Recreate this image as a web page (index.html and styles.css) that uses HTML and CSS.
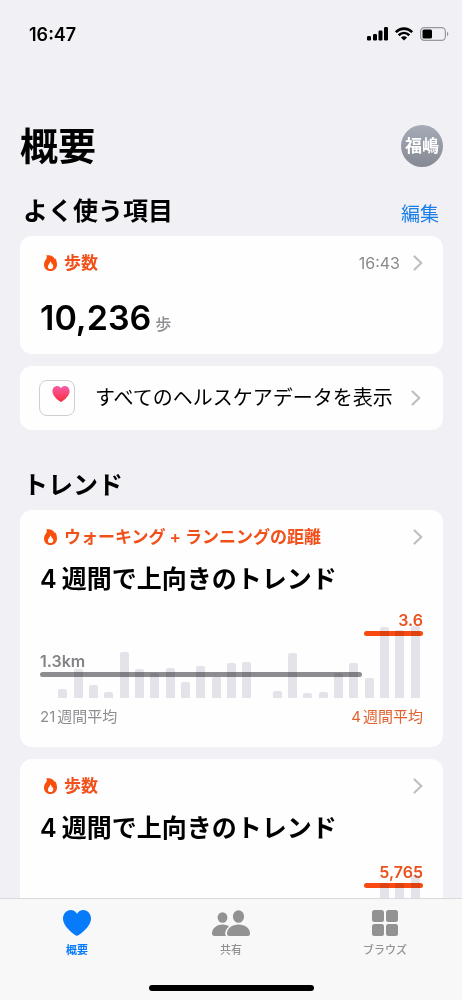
FILE: index.html
```html
<!DOCTYPE html>
<html lang="ja">
<head>
<meta charset="utf-8">
<meta name="viewport" content="width=device-width, initial-scale=1">
<title>概要</title>
<link rel="stylesheet" href="styles.css">
</head>
<body>
<svg class="defs" aria-hidden="true">
  <symbol id="flame" viewBox="0 0 13 16">
    <path fill-rule="evenodd" d="M2.200 0.300C6 -0.300 10 1.200 10.600 4.200C10.900 3.900 11 3.500 11 3.100C12.400 4.800 13 7.200 13 9.400C13 13.300 10.200 16 6.500 16C2.700 16 0 13.400 0 9.700C0 7.400 0.800 5.800 2 4.400C2.900 3.200 3.200 1.600 2.200 0.300ZM6.200 6.300C6.400 8.400 3.900 9.300 3.900 11.700C3.900 13.200 5 14.100 6.500 14.100C8.100 14.100 9.300 13 9.300 11.500C9.300 10.500 8.900 9.600 8.400 9C8.300 9.400 8.100 9.700 7.800 9.800C7.900 8.400 7.400 7.100 6.200 6.300Z"/>
  </symbol>
  <symbol id="chevron" viewBox="0 0 10 16">
    <path d="M1.500 1.500L8.300 8L1.500 14.500" fill="none" stroke="currentColor" stroke-width="2.200" stroke-linecap="round" stroke-linejoin="round"/>
  </symbol>
  <symbol id="heart" viewBox="0 0 28 26">
    <path d="M14 26C13 26 0 17.600 0 8.600C0 3.600 3.400 0 7.700 0C10.400 0 12.700 1.400 14 3.800C15.300 1.400 17.600 0 20.300 0C24.600 0 28 3.600 28 8.600C28 17.600 15 26 14 26Z"/>
  </symbol>
</svg>

<div class="screen">
  <main class="content">
    <div class="status">
      <time class="clock">16:47</time>
      <div class="status-icons">
        <svg width="21" height="14" viewBox="0 0 21 14" aria-label="電波">
          <rect x="0" y="9" width="4" height="4.500" rx="1.200"/>
          <rect x="6" y="7" width="4" height="6.500" rx="1.200"/>
          <rect x="11.500" y="3.500" width="4" height="10" rx="1.200"/>
          <rect x="17" y="0" width="4" height="13.500" rx="1.200"/>
        </svg>
        <svg width="18" height="14" viewBox="0 0 18 14" aria-label="Wi-Fi">
          <g fill="none" stroke="#000" stroke-width="2.600">
            <path d="M0.800 5.200C5.500 0.400 12.500 0.400 17.200 5.200"/>
            <path d="M3.700 8.300C6.900 5.200 11.100 5.200 14.300 8.300"/>
          </g>
          <path d="M9 13.500L5.900 10.500C7.600 8.900 10.400 8.900 12.100 10.500Z"/>
        </svg>
        <svg width="29" height="14" viewBox="0 0 29 14" aria-label="バッテリー">
          <rect x="0.600" y="0.600" width="24.800" height="12.800" rx="3.800" fill="none" stroke="#98989d" stroke-width="1.200"/>
          <rect x="2.500" y="2.500" width="9.500" height="9" rx="1.500"/>
          <path d="M27 4.800C28.700 5.400 28.700 8.600 27 9.200Z" fill="#98989d"/>
        </svg>
      </div>
    </div>

    <header class="page-head">
      <h1 class="page-title">概要</h1>
      <button class="avatar" type="button">福嶋</button>
    </header>

    <section class="section">
      <div class="section-head">
        <h2 class="section-title">よく使う項目</h2>
        <button class="edit" type="button">編集</button>
      </div>
      <div class="cards">
        <a class="card card-value" href="#steps">
          <div class="card-head">
            <svg class="flame"><use href="#flame"/></svg>
            <h3 class="card-label">歩数</h3>
            <time class="card-time">16:43</time>
            <svg class="chevron"><use href="#chevron"/></svg>
          </div>
          <p class="value">10,236<span class="unit">歩</span></p>
        </a>
        <a class="card card-row" href="#all">
          <span class="app-icon">
            <svg width="18" height="16" viewBox="0 0 28 26">
              <defs>
                <linearGradient id="pink" x1="0" y1="0" x2="0" y2="1">
                  <stop offset="0" stop-color="#f55fa8"/>
                  <stop offset="1" stop-color="#fb2b3c"/>
                </linearGradient>
              </defs>
              <path fill="url(#pink)" d="M14 26C13 26 0 17.600 0 8.600C0 3.600 3.400 0 7.700 0C10.400 0 12.700 1.400 14 3.800C15.300 1.400 17.600 0 20.300 0C24.600 0 28 3.600 28 8.600C28 17.600 15 26 14 26Z"/>
            </svg>
          </span>
          <span class="row-text">すべてのヘルスケアデータを表示</span>
          <svg class="chevron"><use href="#chevron"/></svg>
        </a>
      </div>
    </section>

    <section class="section section-trends">
      <div class="section-head">
        <h2 class="section-title">トレンド</h2>
      </div>
      <div class="cards">
        <a class="card" href="#distance">
          <div class="card-head">
            <svg class="flame"><use href="#flame"/></svg>
            <h3 class="card-label">ウォーキング<span class="plus">+</span>ランニングの距離</h3>
            <svg class="chevron"><use href="#chevron"/></svg>
          </div>
          <p class="trend-title"><span class="num">4</span>週間で上向きのトレンド</p>
          <div class="plot">
            <div class="bars">
              <i class="bar" style="height:0"></i><i class="bar" style="height:9px"></i><i class="bar" style="height:29px"></i><i class="bar" style="height:13px"></i><i class="bar" style="height:6px"></i><i class="bar" style="height:46px"></i><i class="bar" style="height:29px"></i><i class="bar" style="height:25px"></i><i class="bar" style="height:30px"></i><i class="bar" style="height:16px"></i><i class="bar" style="height:32px"></i><i class="bar" style="height:21px"></i><i class="bar" style="height:35px"></i><i class="bar" style="height:36px"></i><i class="bar" style="height:0"></i><i class="bar" style="height:7px"></i><i class="bar" style="height:45px"></i><i class="bar" style="height:5px"></i><i class="bar" style="height:6px"></i><i class="bar" style="height:25px"></i><i class="bar" style="height:35px"></i><i class="bar" style="height:20px"></i><i class="bar" style="height:71px"></i><i class="bar" style="height:68px"></i><i class="bar" style="height:72px"></i>
            </div>
            <div class="average average-past" style="bottom:21px"><span class="average-value">1.3km</span></div>
            <div class="average average-recent" style="bottom:62px"><span class="average-value">3.6</span></div>
          </div>
          <div class="legend">
            <span><span class="num-small">21</span>週間平均</span>
            <span class="legend-recent"><span class="num-small">4</span>週間平均</span>
          </div>
        </a>
        <a class="card" href="#steps-trend">
          <div class="card-head">
            <svg class="flame"><use href="#flame"/></svg>
            <h3 class="card-label">歩数</h3>
            <svg class="chevron"><use href="#chevron"/></svg>
          </div>
          <p class="trend-title"><span class="num">4</span>週間で上向きのトレンド</p>
          <div class="plot">
            <div class="bars">
              <i class="bar" style="height:0"></i><i class="bar" style="height:9px"></i><i class="bar" style="height:29px"></i><i class="bar" style="height:13px"></i><i class="bar" style="height:6px"></i><i class="bar" style="height:40px"></i><i class="bar" style="height:29px"></i><i class="bar" style="height:25px"></i><i class="bar" style="height:30px"></i><i class="bar" style="height:16px"></i><i class="bar" style="height:32px"></i><i class="bar" style="height:21px"></i><i class="bar" style="height:35px"></i><i class="bar" style="height:36px"></i><i class="bar" style="height:0"></i><i class="bar" style="height:7px"></i><i class="bar" style="height:40px"></i><i class="bar" style="height:5px"></i><i class="bar" style="height:6px"></i><i class="bar" style="height:25px"></i><i class="bar" style="height:35px"></i><i class="bar" style="height:20px"></i><i class="bar" style="height:64px"></i><i class="bar" style="height:64px"></i><i class="bar" style="height:72px"></i>
            </div>
            <div class="average average-recent" style="bottom:59px"><span class="average-value">5,765</span></div>
          </div>
        </a>
      </div>
    </section>
  </main>

  <nav class="tabs">
    <div class="tab-list">
      <a class="tab tab-active" href="#summary" aria-current="page">
        <svg width="28" height="26"><use href="#heart"/></svg>
        <span>概要</span>
      </a>
      <a class="tab" href="#sharing">
        <svg width="38" height="26" viewBox="0 0 38 26">
          <ellipse cx="10.500" cy="7.500" rx="4.900" ry="5.200"/>
          <path d="M0 23.500C0 18.500 4.500 14.500 10.500 14.500C13 14.500 15.200 15.200 17 16.400C14.600 18.300 13.200 20.800 13.200 23.500C13.200 24.500 13.500 25.300 14 26H2.400C0.800 26 0 25 0 23.500Z"/>
          <ellipse cx="26.500" cy="6.500" rx="5.600" ry="6.300"/>
          <path d="M15 23.500C15 18.500 20 14.600 26.500 14.600C33 14.600 38 18.500 38 23.500C38 25.200 37.200 26 35.500 26H17.500C15.800 26 15 25.200 15 23.500Z"/>
        </svg>
        <span>共有</span>
      </a>
      <a class="tab" href="#browse">
        <svg width="26" height="26" viewBox="0 0 26 26">
          <rect width="12" height="12" rx="2.500"/>
          <rect x="14" width="12" height="12" rx="2.500"/>
          <rect y="14" width="12" height="12" rx="2.500"/>
          <rect x="14" y="14" width="12" height="12" rx="2.500"/>
        </svg>
        <span>ブラウズ</span>
      </a>
    </div>
    <div class="home-indicator"></div>
  </nav>
</div>
</body>
</html>
```

FILE: styles.css
```css
* {
  box-sizing: border-box;
}

body {
  margin: 0;
  background: #f1f0f5;
  color: #000;
  font-family: Inter, "Noto Sans CJK JP", sans-serif;
}

h1,
h2,
h3,
p {
  margin: 0;
}

a {
  color: inherit;
  text-decoration: none;
}

button {
  border: 0;
  padding: 0;
  background: none;
  font-family: inherit;
  cursor: pointer;
}

.defs {
  display: none;
}

.screen {
  display: flex;
  flex-direction: column;
  height: 100vh;
}

.content {
  flex: 1;
  min-height: 0;
  padding: 0 19px 20px 20px;
  overflow-y: auto;
  scrollbar-width: none;
}

/* Status bar */

.status {
  display: flex;
  align-items: center;
  justify-content: space-between;
  height: 68px;
  margin-right: -6px;
  padding-left: 9px;
}

.clock {
  font-size: 18px;
  font-weight: 600;
}

.status-icons {
  display: flex;
  gap: 7px;
}

/* Page header */

.page-head {
  display: flex;
  align-items: center;
  justify-content: space-between;
  height: 42px;
  margin-top: 57px;
}

.page-title {
  font-size: 38px;
  font-weight: 700;
  line-height: 42px;
}

.avatar {
  width: 42px;
  height: 42px;
  border-radius: 50%;
  background: linear-gradient(#a5abb8, #868993);
  color: #fff;
  font-size: 17px;
  font-weight: 600;
  line-height: 42px;
}

/* Sections */

.section {
  padding-top: 26px;
}

.section-trends {
  padding-top: 37px;
}

.section-head {
  display: flex;
  align-items: flex-end;
  justify-content: space-between;
  padding: 0 4px 7px 3px;
}

.section-title {
  font-size: 25px;
  font-weight: 600;
  line-height: 36px;
}

.edit {
  color: #1a7fe8;
  font-size: 19px;
  line-height: 28px;
}

.cards {
  display: flex;
  flex-direction: column;
  gap: 12px;
}

/* Cards */

.card {
  display: block;
  padding: 16px 20px 20px;
  border-radius: 12px;
  background: #fefefe;
}

.card-value {
  padding-bottom: 16px;
}

.card-head {
  display: flex;
  align-items: center;
  height: 22px;
  padding-left: 4px;
  color: #f1501b;
}

.flame {
  width: 13px;
  height: 16px;
  margin-right: 7px;
  fill: #f94f0c;
}

.card-label {
  flex: 1;
  font-size: 17px;
  font-weight: 600;
  line-height: 22px;
}

.plus {
  margin: 0 4px;
}

.card-time {
  margin-right: 13px;
  color: #8a8a8e;
  font-size: 16px;
}

.chevron {
  width: 10px;
  height: 16px;
  color: #bfbfc2;
}

.value {
  margin-top: 24px;
  font-size: 34px;
  font-weight: 600;
  line-height: 40px;
}

.unit {
  margin-left: 4px;
  color: #8e8e92;
  font-size: 16px;
  font-weight: 500;
  line-height: 16px;
}

.card-row {
  display: flex;
  align-items: center;
  padding: 14px 22px 14px 19px;
}

.app-icon {
  display: flex;
  justify-content: flex-end;
  width: 36px;
  height: 36px;
  padding: 5px 4px;
  border: 1px solid #cfcfd2;
  border-radius: 8px;
}

.row-text {
  flex: 1;
  margin-left: 20px;
  font-size: 20px;
  line-height: 36px;
  white-space: nowrap;
}

/* Trends */

.trend-title {
  margin-top: 14px;
  font-size: 25px;
  font-weight: 600;
  line-height: 34px;
  white-space: nowrap;
}

.num {
  margin-right: 5px;
}

.plot {
  position: relative;
  margin-top: 5px;
}

.bars {
  display: flex;
  align-items: flex-end;
  justify-content: space-around;
  height: 97px;
}

.bar {
  width: 9px;
  border-radius: 2px 2px 0 0;
  background: #e4e3e9;
}

.average {
  position: absolute;
  height: 5px;
  border-radius: 3px;
  mix-blend-mode: multiply;
}

.average-past {
  left: 0;
  width: 84%;
  background: #8e8d91;
  color: #858489;
}

.average-recent {
  right: 0;
  width: 59px;
  background: #fa4a12;
  color: #ea521d;
  text-align: right;
}

.average-value {
  position: absolute;
  bottom: 7px;
  font-size: 16px;
  font-weight: 600;
  line-height: 18px;
}

.average-past .average-value {
  left: 0;
}

.average-recent .average-value {
  right: 0;
}

.legend {
  display: flex;
  justify-content: space-between;
  margin-top: 9px;
  color: #8e8e92;
  font-size: 15px;
  line-height: 20px;
}

.legend-recent {
  color: #e0602f;
}

.num-small {
  margin-right: 2px;
}

/* Tab bar */

.tabs {
  height: 102px;
  border-top: 1px solid #d9d9dc;
  background: #f8f8f9;
}

.tab-list {
  display: grid;
  grid-template-columns: repeat(3, 1fr);
  height: 86px;
  padding-top: 11px;
}

.tab {
  display: flex;
  flex-direction: column;
  align-items: center;
  gap: 6px;
  color: #929292;
  fill: currentColor;
  font-size: 11px;
  font-weight: 500;
  line-height: 16px;
}

.tab-active {
  color: #087bfb;
  font-weight: 600;
}

.home-indicator {
  width: 165px;
  height: 6px;
  margin: 0 auto;
  border-radius: 3px;
  background: #000;
}
```
